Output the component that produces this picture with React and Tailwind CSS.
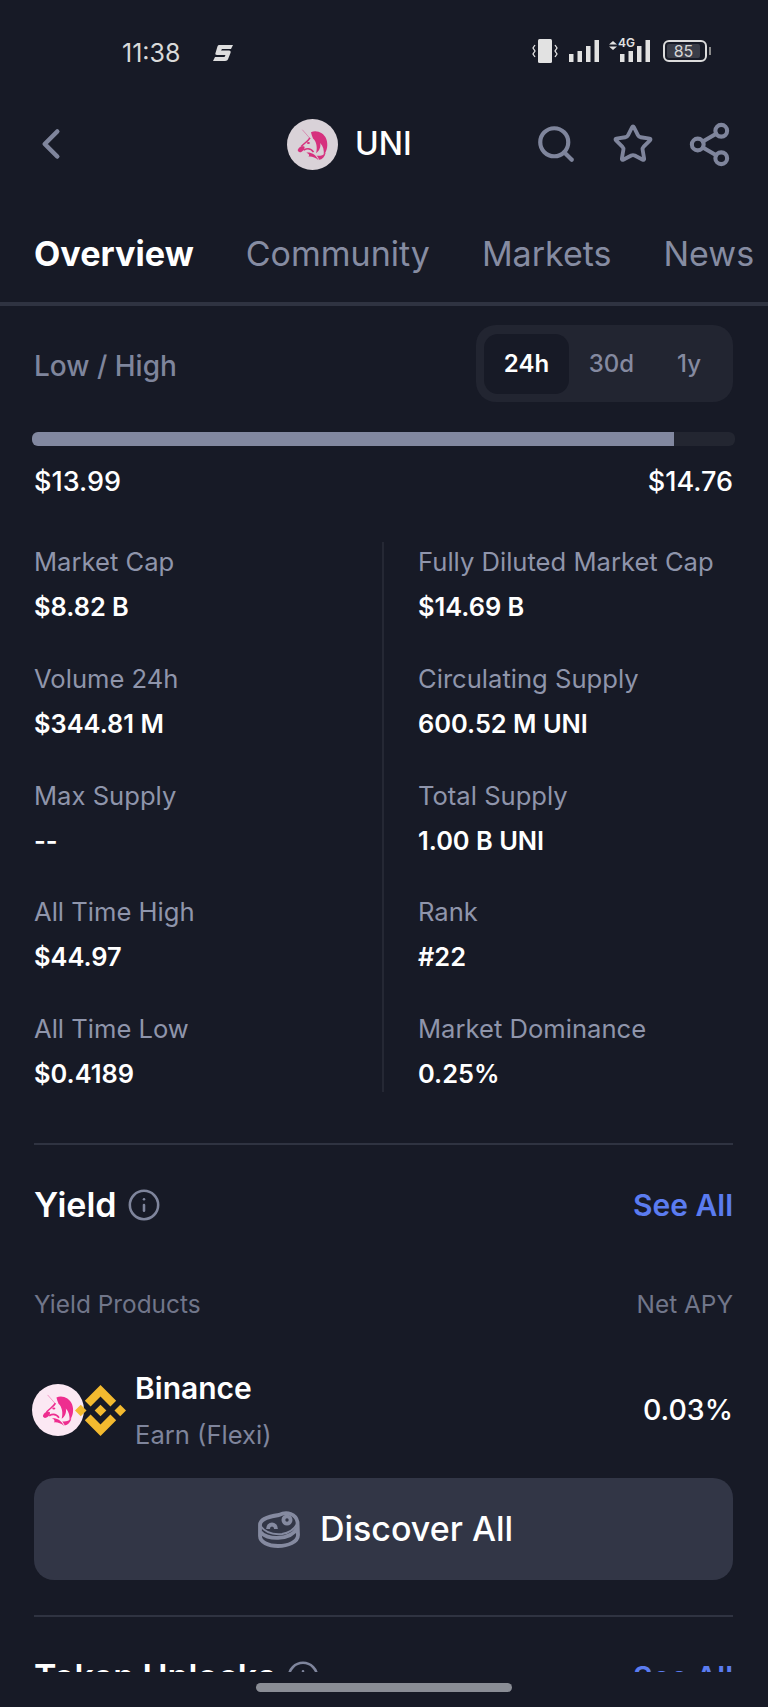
import React from 'react';
import { ChevronLeft, Search, Star, Share2, Info } from 'lucide-react';

const stats = [
    ['Market Cap', '$8.82 B', 'Fully Diluted Market Cap', '$14.69 B'],
    ['Volume 24h', '$344.81 M', 'Circulating Supply', '600.52 M UNI'],
    ['Max Supply', '--', 'Total Supply', '1.00 B UNI'],
    ['All Time High', '$44.97', 'Rank', '#22'],
    ['All Time Low', '$0.4189', 'Market Dominance', '0.25%'],
];

function UniLogo({ bg, fg, size }) {
    return (
        <svg width={size} height={size} viewBox="0 0 100 100" className="shrink-0">
            <circle cx="50" cy="50" r="50" fill={bg} />
            <path d="M30 21 L45 38" stroke={fg} strokeWidth="1.5" opacity="0.55" />
            <path fill={fg} d="M47 26 C58 21 72 27 77 39 C81 50 79 62 72 71 C73 61 71 53 65 47 C67 55 63 63 57 67 C60 56 58 44 51 38 C49 34 48 30 47 26Z" />
            <path fill="none" stroke={fg} strokeWidth="3" d="M45 37 C41 44 34 47 28 54 M33 61 C40 57 47 58 52 65" />
            <path fill={fg} d="M21 61 C23 54 29 52 34 54 C36 58 32 63 27 65 C24 66 21 64 21 61Z" />
            <ellipse cx="42" cy="47" rx="3" ry="2" fill={fg} />
            <path fill={fg} d="M38 66 C47 65 56 69 62 81 C55 75 48 73 42 74 C45 71 43 68 38 66Z" />
            <path fill={fg} d="M58 72 C65 73 71 71 76 66 C74 74 69 79 63 80 C62 77 60 74 58 72Z" />
        </svg>
    );
}

function BinanceLogo() {
    return (
        <svg width="51" height="51" viewBox="0 0 126.61 126.61" fill="#f3ba2f" className="shrink-0">
            <path d="M38.73 53.2l24.59-24.58 24.6 24.6 14.3-14.31L63.32 0 24.42 38.9z" />
            <path d="M0 63.31l14.3-14.31 14.31 14.31-14.31 14.3z" />
            <path d="M38.73 73.41L63.32 98l24.6-24.6 14.31 14.29-38.9 38.91-38.91-38.88z" />
            <path d="M98 63.31l14.3-14.31 14.31 14.3-14.31 14.32z" />
            <path d="M77.83 63.3L63.32 48.78 52.59 59.51l-1.24 1.23-2.54 2.54 14.51 14.5 14.51-14.47z" />
        </svg>
    );
}

function Bars() {
    return (
        <svg width="30" height="22" viewBox="0 0 30 22" fill="#e2e2e2" className="shrink-0">
            <rect x="0" y="14" width="4.5" height="8" />
            <rect x="8.5" y="11" width="4.5" height="11" />
            <rect x="17" y="6" width="4.5" height="16" />
            <rect x="25.5" y="0" width="4.5" height="22" />
        </svg>
    );
}

function StatusBar() {
    return (
        <div className="flex h-[104px] items-center pl-[122px] pr-[57px] pt-[2px]">
            <span className="w-[91px] text-[25px] leading-none text-[#dadada]">11:38</span>
            <svg width="20" height="16" viewBox="0 0 20 16" fill="#dedede">
                <path d="M6 0H20L18 4H9L8 5.5H16C17.5 5.5 18 6.5 17.5 8L15.5 13C15 15 14 16 12 16H0L2 12H11.5L12.5 10H4C2.5 10 2 9 2.5 8L4 3C4.5 1 5 0 6 0Z" />
            </svg>
            <div className="mb-[6px] ml-auto flex items-end">
                <svg width="26" height="24" viewBox="0 0 26 24" className="mb-[-1px] mr-[11px]">
                    <rect x="6" y="0" width="14" height="24" rx="1.5" fill="#e2e2e2" />
                    <path d="M3 6 L1 9 L3 12 L1 15 L3 18 M23 6 L25 9 L23 12 L25 15 L23 18" fill="none" stroke="#e2e2e2" strokeWidth="1.3" />
                </svg>
                <Bars />
                <div className="relative ml-[10px] flex items-end">
                    <svg width="8" height="9" viewBox="0 0 8 9" fill="#e2e2e2" className="mb-[12px] mr-[3px]">
                        <path d="M4 0L8 3.5H0Z M4 9L0 5.5H8Z" />
                    </svg>
                    <span className="absolute left-[9px] top-[-3px] text-[12px] font-semibold leading-none text-[#e2e2e2]">4G</span>
                    <div className="h-[22px] w-[30px]">
                        <Bars />
                    </div>
                </div>
                <div className="ml-[13px] flex items-center">
                    <div className="flex h-[22px] w-[44px] items-center rounded-[6px] border-2 border-[#dcdcdc] p-[2px]">
                        <div className="flex h-full w-[33px] items-center justify-center rounded-[2px] bg-[#3a3d48] text-[16px] leading-none text-[#d6d6d6]">85</div>
                    </div>
                    <div className="ml-[2px] h-[8px] w-[2px] bg-[#8a8a8a]" />
                </div>
            </div>
        </div>
    );
}

function NavBar() {
    return (
        <div className="flex h-[80px] items-center pl-[26px] pr-[35px]">
            <ChevronLeft size={50} strokeWidth={2.2} color="#7f859c" className="shrink-0" />
            <div className="ml-[211px] flex items-center">
                <UniLogo bg="#d9d2d8" fg="#d6317e" size={51} />
                <span className="ml-[17px] text-[32px] font-medium leading-none text-white">UNI</span>
            </div>
            <div className="ml-auto flex items-center">
                <Search size={42} strokeWidth={2.4} color="#7f859c" />
                <Star size={42} strokeWidth={2.2} color="#7f859c" className="ml-[35px]" />
                <Share2 size={47} strokeWidth={2.1} color="#7f859c" className="ml-[32px]" />
            </div>
        </div>
    );
}

function Tabs() {
    return (
        <div className="flex h-[122px] gap-[52px] overflow-hidden border-b-4 border-[#2f3341] pl-[34px]">
            <div className="-mb-[4px] flex h-[122px] shrink-0 items-start border-b-4 border-[#4a72e8] pt-[50px]">
                <span className="text-[34.2px] font-bold leading-[40px] text-white">Overview</span>
            </div>
            {['Community', 'Markets', 'News'].map((tab) => (
                <div key={tab} className="shrink-0 pt-[50px] text-[34px] leading-[40px] text-[#868ca2]">{tab}</div>
            ))}
        </div>
    );
}

function Range() {
    return (
        <>
            <div className="mt-[19px] flex items-center justify-between">
                <span className="pt-[4px] text-[28px] font-medium text-[#7f859c]">Low / High</span>
                <div className="flex h-[77px] w-[257px] items-center rounded-[20px] bg-[#222531] px-[8px]">
                    <div className="flex h-[60px] w-[85px] items-center justify-center rounded-[14px] bg-[#171a26] text-[24px] font-semibold text-white">24h</div>
                    <div className="w-[85px] text-center text-[24px] font-medium text-[#858aa0]">30d</div>
                    <div className="w-[70px] text-center text-[24px] font-medium text-[#858aa0]">1y</div>
                </div>
            </div>
            <div className="-mx-[2px] mt-[30px] h-[14px] overflow-hidden rounded-[6px] bg-[#232631]">
                <div className="h-full w-[642px] bg-[#8288a0]" />
            </div>
            <div className="mt-[20px] flex justify-between text-[27px] font-medium leading-[32px] text-white">
                <span>$13.99</span>
                <span>$14.76</span>
            </div>
        </>
    );
}

function Stats() {
    return (
        <div className="relative mt-[44px] flex flex-col gap-[35.75px] pt-[2px]">
            <div className="absolute bottom-0 left-[348px] top-0 w-[2px] bg-[#252834]" />
            {stats.map(([a, b, c, d]) => (
                <div key={a} className="grid grid-cols-[384px_1fr]">
                    <div>
                        <div className="text-[25.6px] leading-[36px] text-[#8f95ab]">{a}</div>
                        <div className="mt-[9px] text-[25.4px] font-semibold leading-[36px] text-white">{b}</div>
                    </div>
                    <div>
                        <div className="text-[25.6px] leading-[36px] text-[#8f95ab]">{c}</div>
                        <div className="mt-[9px] text-[25.4px] font-semibold leading-[36px] text-white">{d}</div>
                    </div>
                </div>
            ))}
        </div>
    );
}

function SectionHead({ title, className }) {
    return (
        <div className={`flex h-[40px] items-center justify-between ${className}`}>
            <div className="flex items-center">
                <span className="text-[34px] font-semibold leading-[40px] text-white">{title}</span>
                <Info size={34} strokeWidth={1.8} color="#7f859c" className="ml-[10px]" />
            </div>
            <span className="text-[30px] font-semibold leading-[40px] text-[#5b7cf0]">See All</span>
        </div>
    );
}

function Yield() {
    return (
        <>
            <SectionHead title="Yield" className="mt-[40px]" />
            <div className="mt-[64px] flex justify-between text-[24.4px] leading-[30px] text-[#71768a]">
                <span>Yield Products</span>
                <span>Net APY</span>
            </div>
            <div className="mt-[51px] flex items-center">
                <div className="-ml-[2px] mb-[3px] flex w-[103px] items-center">
                    <UniLogo bg="#fbe8f3" fg="#ee2d8f" size={52} />
                    <div className="-ml-[9px]">
                        <BinanceLogo />
                    </div>
                </div>
                <div>
                    <div className="text-[30px] font-semibold leading-[36px] text-white">Binance</div>
                    <div className="mt-[11px] text-[25.6px] leading-[36px] text-[#7f859c]">Earn (Flexi)</div>
                </div>
                <span className="mb-[3px] ml-auto text-[28.5px] font-medium text-white">0.03%</span>
            </div>
            <div className="mt-[25px] flex h-[102px] items-center justify-center rounded-[20px] bg-[#323646]">
                <svg width="42" height="37" viewBox="0 0 42 37" fill="none" stroke="#858aa0" strokeWidth="3.8" className="mr-[20px] ml-[4px]">
                    <path d="M2 14 C2 8 13 5 21 4 C29 0 38 3 39.5 11 L40 24 C40 31 30 35 20 35 C10 35 2 31 2 25 Z" />
                    <path d="M2.5 21 C8 29 32 30 39.5 17" />
                    <path d="M2.5 15 C7 21 14 24 24 23 C30 22 36 19 39 13" strokeWidth="2" />
                    <circle cx="29" cy="9" r="3.6" />
                    <path d="M10 18 C10 12 18 12 18 18" />
                </svg>
                <span className="text-[34px] font-medium leading-none text-white">Discover All</span>
            </div>
        </>
    );
}

export default function App() {
    return (
        <div className="flex h-[1707px] w-full flex-col overflow-hidden bg-[#171a26] [font-family:Inter,sans-serif]">
            <StatusBar />
            <NavBar />
            <Tabs />
            <div className="flex-1 overflow-hidden pl-[34px] pr-[35px]">
                <Range />
                <Stats />
                <div className="mt-[51px] h-[2px] bg-[#2f3341]" />
                <Yield />
                <div className="mt-[35px] h-[2px] bg-[#2f3341]" />
                <SectionHead title="Token Unlocks" className="mt-[40px]" />
            </div>
            <div className="flex h-[35px] shrink-0 justify-center pt-[11px]">
                <div className="h-[9px] w-[256px] rounded-full bg-[#8a8d95]" />
            </div>
        </div>
    );
}
